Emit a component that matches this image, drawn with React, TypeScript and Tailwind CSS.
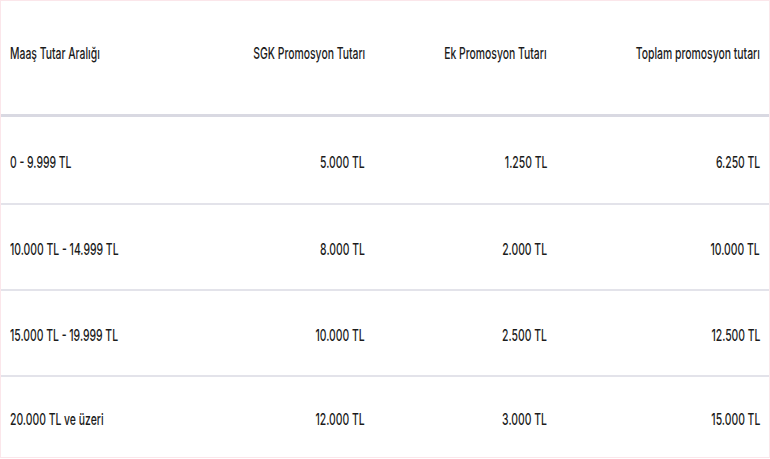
const rows = [
  ["0 - 9.999 TL", "5.000 TL", "1.250 TL", "6.250 TL"],
  ["10.000 TL - 14.999 TL", "8.000 TL", "2.000 TL", "10.000 TL"],
  ["15.000 TL - 19.999 TL", "10.000 TL", "2.500 TL", "12.500 TL"],
  ["20.000 TL ve üzeri", "12.000 TL", "3.000 TL", "15.000 TL"],
];

const headers = [
  "Maaş Tutar Aralığı",
  "SGK Promosyon Tutarı",
  "Ek Promosyon Tutarı",
  "Toplam promosyon tutarı",
];

function Cell({ text, first }: { text: string; first: boolean }) {
  return (
    <div className={first ? "text-left" : "text-right"}>
      <span
        className={`inline-block whitespace-nowrap scale-x-[0.65] ${
          first ? "origin-left" : "origin-right"
        }`}
      >
        {text}
      </span>
    </div>
  );
}

export default function App() {
  return (
    <div
      className="w-[770px] h-[459px] bg-white text-[#1c1c1c] font-medium text-[16px]"
      style={{ fontFamily: "Inter, 'Liberation Sans', sans-serif" }}
    >
      <div className="border border-[#fbe6ea]">
        <div className="grid grid-cols-[175px_180px_182px_213px] items-center h-[116px] pb-[10px] pl-[9px] pr-[8px] border-b-[3px] border-[#d9d9e2]">
          {headers.map((h, i) => (
            <Cell key={h} text={h} first={i === 0} />
          ))}
        </div>
        {rows.map((r, ri) => (
          <div
            key={ri}
            className={`grid grid-cols-[175px_180px_182px_213px] items-center pt-[3px] pl-[9px] pr-[8px] ${
              ri === 0 ? "h-[88px]" : ri === 3 ? "h-[80px]" : "h-[86px]"
            } ${ri < 3 ? "border-b-2 border-[#e3e3ea]" : ""}`}
          >
            {r.map((c, ci) => (
              <Cell key={ci} text={c} first={ci === 0} />
            ))}
          </div>
        ))}
      </div>
    </div>
  );
}
